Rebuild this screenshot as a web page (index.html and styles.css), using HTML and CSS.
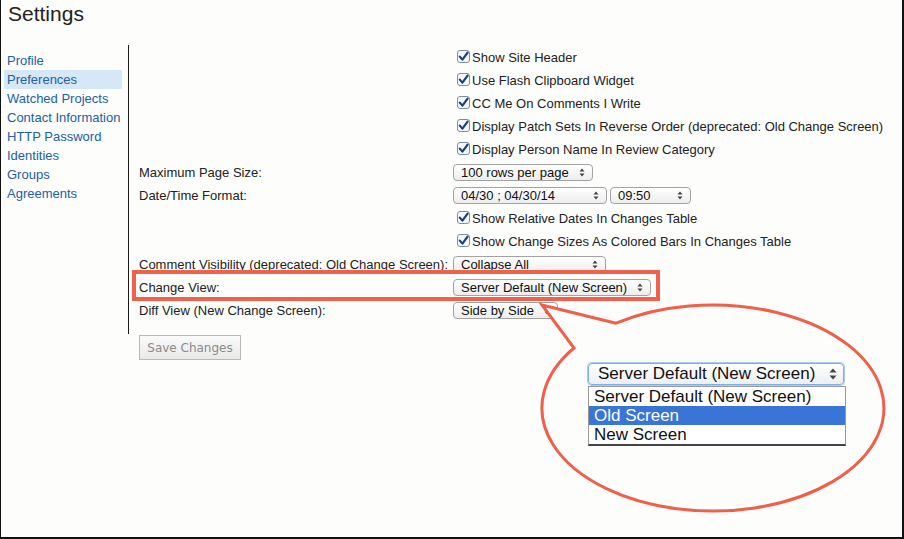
FILE: index.html
```html
<!DOCTYPE html>
<html>
<head>
<meta charset="utf-8">
<link rel="stylesheet" href="styles.css">
</head>
<body>
<div class="frame">
  <h1 class="title">Settings</h1>
  <div class="main">
    <nav class="side">
      <a class="nav">Profile</a>
      <a class="nav active">Preferences</a>
      <a class="nav">Watched Projects</a>
      <a class="nav">Contact Information</a>
      <a class="nav">HTTP Password</a>
      <a class="nav">Identities</a>
      <a class="nav">Groups</a>
      <a class="nav">Agreements</a>
    </nav>
    <div class="content">
      <div class="grid">
        <div class="lbl"></div>
        <div class="ctl"><span class="chk"><svg class="box" width="13" height="13" viewBox="0 0 13 13"><rect x="0.5" y="0.5" width="12" height="12" rx="2.5" fill="#f4f8fc" stroke="#7f8fa3"/><path d="M2.8 6.6 L5.4 9.6 L10.6 2.6" fill="none" stroke="#1b3f7a" stroke-width="2.2" stroke-linecap="round" stroke-linejoin="round"/></svg>Show Site Header</span></div>
        <div class="lbl"></div>
        <div class="ctl"><span class="chk"><svg class="box" width="13" height="13" viewBox="0 0 13 13"><rect x="0.5" y="0.5" width="12" height="12" rx="2.5" fill="#f4f8fc" stroke="#7f8fa3"/><path d="M2.8 6.6 L5.4 9.6 L10.6 2.6" fill="none" stroke="#1b3f7a" stroke-width="2.2" stroke-linecap="round" stroke-linejoin="round"/></svg>Use Flash Clipboard Widget</span></div>
        <div class="lbl"></div>
        <div class="ctl"><span class="chk"><svg class="box" width="13" height="13" viewBox="0 0 13 13"><rect x="0.5" y="0.5" width="12" height="12" rx="2.5" fill="#f4f8fc" stroke="#7f8fa3"/><path d="M2.8 6.6 L5.4 9.6 L10.6 2.6" fill="none" stroke="#1b3f7a" stroke-width="2.2" stroke-linecap="round" stroke-linejoin="round"/></svg>CC Me On Comments I Write</span></div>
        <div class="lbl"></div>
        <div class="ctl"><span class="chk"><svg class="box" width="13" height="13" viewBox="0 0 13 13"><rect x="0.5" y="0.5" width="12" height="12" rx="2.5" fill="#f4f8fc" stroke="#7f8fa3"/><path d="M2.8 6.6 L5.4 9.6 L10.6 2.6" fill="none" stroke="#1b3f7a" stroke-width="2.2" stroke-linecap="round" stroke-linejoin="round"/></svg>Display Patch Sets In Reverse Order (deprecated: Old Change Screen)</span></div>
        <div class="lbl"></div>
        <div class="ctl"><span class="chk"><svg class="box" width="13" height="13" viewBox="0 0 13 13"><rect x="0.5" y="0.5" width="12" height="12" rx="2.5" fill="#f4f8fc" stroke="#7f8fa3"/><path d="M2.8 6.6 L5.4 9.6 L10.6 2.6" fill="none" stroke="#1b3f7a" stroke-width="2.2" stroke-linecap="round" stroke-linejoin="round"/></svg>Display Person Name In Review Category</span></div>

        <div class="lbl">Maximum Page Size:</div>
        <div class="ctl sels"><span class="sel w-rows">100 rows per page<svg class="arr" width="6" height="9" viewBox="0 0 6 9"><path d="M3 0.5 L5.5 3.5 L0.5 3.5Z M3 8.5 L5.5 5.5 L0.5 5.5Z" fill="#444"/></svg></span></div>

        <div class="lbl">Date/Time Format:</div>
        <div class="ctl sels"><span class="sel w-date">04/30 ; 04/30/14<svg class="arr" width="6" height="9" viewBox="0 0 6 9"><path d="M3 0.5 L5.5 3.5 L0.5 3.5Z M3 8.5 L5.5 5.5 L0.5 5.5Z" fill="#444"/></svg></span><span class="sel w-time">09:50<svg class="arr" width="6" height="9" viewBox="0 0 6 9"><path d="M3 0.5 L5.5 3.5 L0.5 3.5Z M3 8.5 L5.5 5.5 L0.5 5.5Z" fill="#444"/></svg></span></div>

        <div class="lbl"></div>
        <div class="ctl"><span class="chk"><svg class="box" width="13" height="13" viewBox="0 0 13 13"><rect x="0.5" y="0.5" width="12" height="12" rx="2.5" fill="#f4f8fc" stroke="#7f8fa3"/><path d="M2.8 6.6 L5.4 9.6 L10.6 2.6" fill="none" stroke="#1b3f7a" stroke-width="2.2" stroke-linecap="round" stroke-linejoin="round"/></svg>Show Relative Dates In Changes Table</span></div>
        <div class="lbl"></div>
        <div class="ctl"><span class="chk"><svg class="box" width="13" height="13" viewBox="0 0 13 13"><rect x="0.5" y="0.5" width="12" height="12" rx="2.5" fill="#f4f8fc" stroke="#7f8fa3"/><path d="M2.8 6.6 L5.4 9.6 L10.6 2.6" fill="none" stroke="#1b3f7a" stroke-width="2.2" stroke-linecap="round" stroke-linejoin="round"/></svg>Show Change Sizes As Colored Bars In Changes Table</span></div>

        <div class="lbl">Comment Visibility (deprecated: Old Change Screen):</div>
        <div class="ctl sels"><span class="sel w-collapse">Collapse All<svg class="arr" width="6" height="9" viewBox="0 0 6 9"><path d="M3 0.5 L5.5 3.5 L0.5 3.5Z M3 8.5 L5.5 5.5 L0.5 5.5Z" fill="#444"/></svg></span></div>

        <div class="lbl">Change View:</div>
        <div class="ctl sels"><span class="sel w-view">Server Default (New Screen)<svg class="arr" width="6" height="9" viewBox="0 0 6 9"><path d="M3 0.5 L5.5 3.5 L0.5 3.5Z M3 8.5 L5.5 5.5 L0.5 5.5Z" fill="#444"/></svg></span></div>

        <div class="lbl">Diff View (New Change Screen):</div>
        <div class="ctl sels"><span class="sel w-diff">Side by Side<svg class="arr" width="6" height="9" viewBox="0 0 6 9"><path d="M3 0.5 L5.5 3.5 L0.5 3.5Z M3 8.5 L5.5 5.5 L0.5 5.5Z" fill="#444"/></svg></span></div>
      </div>
    </div>
  </div>
  <div class="actions"><button class="save" disabled>Save Changes</button></div>

  <div class="highlight"></div>

  <svg class="callout" width="904" height="539" viewBox="0 0 904 539">
    <path d="M616 323.2 L542 305 L574 348 A171 103 0 1 0 616 323.2 Z" fill="#fdfdfb" stroke="#ef5f4a" stroke-width="3" stroke-linejoin="miter"/>
  </svg>

  <div class="bigsel">Server Default (New Screen)<svg class="bigarr" width="8" height="12" viewBox="0 0 8 12"><path d="M4 0.5 L7.5 4.5 L0.5 4.5Z M4 11.5 L7.5 7.5 L0.5 7.5Z" fill="#444"/></svg></div>
  <div class="listbox">
    <div class="opt">Server Default (New Screen)</div>
    <div class="opt picked">Old Screen</div>
    <div class="opt">New Screen</div>
  </div>
</div>
</body>
</html>
```
FILE: styles.css
```css
html, body {
  margin: 0;
  padding: 0;
  background: #fdfdfb;
}

.frame {
  position: relative;
  width: 904px;
  height: 539px;
  box-sizing: border-box;
  border-left: 1px solid #111;
  border-right: 2px solid #111;
  border-bottom: 2px solid #111;
  background: #fdfdfb;
  font-family: "Liberation Sans", Arial, sans-serif;
  font-size: 13px;
  color: #222;
  overflow: hidden;
}

.title {
  margin: 0;
  height: 43px;
  padding: 2px 0 0 7px;
  font-size: 21px;
  line-height: 24px;
  font-weight: normal;
  color: #222;
}

.main {
  display: flex;
}

.side {
  width: 127px;
  border-right: 1px solid #1a1a1a;
  padding-top: 6px;
  display: flex;
  flex-direction: column;
}

.nav {
  display: block;
  margin-left: 3px;
  width: 118px;
  height: 19px;
  line-height: 19px;
  padding-left: 3px;
  box-sizing: border-box;
  color: #2160a8;
  white-space: nowrap;
}

.nav.active {
  background: #d6e7f6;
}

.content {
  padding: 1px 0 12px 10px;
}

.grid {
  display: grid;
  grid-template-columns: 314px auto;
  grid-auto-rows: 23px;
  align-items: center;
}

.lbl {
  white-space: nowrap;
}

.ctl {
  display: flex;
  align-items: center;
  white-space: nowrap;
}

.chk {
  display: flex;
  align-items: center;
  padding-left: 4px;
}

.box {
  margin-right: 2px;
  margin-top: -2px;
}

.sels {
  gap: 3px;
}

.sel {
  display: inline-flex;
  align-items: center;
  justify-content: space-between;
  box-sizing: border-box;
  height: 17px;
  padding: 0 7px 0 7px;
  border: 1px solid #a3a3a3;
  border-radius: 4px;
  background: linear-gradient(#ffffff, #ededed);
  color: #111;
  font-size: 13px;
  line-height: 15px;
}

.arr {
  flex: none;
}

.w-rows { width: 140px; }
.w-date { width: 154px; }
.w-time { width: 81px; }
.w-collapse { width: 153px; }
.w-view { width: 198px; }
.w-diff { width: 105px; }

.actions {
  padding: 1px 0 0 138px;
}

.save {
  width: 102px;
  height: 25px;
  margin: 0;
  padding: 0;
  border: 1px solid #b9b9b9;
  background: linear-gradient(#fafafa, #e9e9e9);
  color: #8a8a8a;
  font-family: "DejaVu Sans", sans-serif;
  font-size: 12px;
}

.highlight {
  position: absolute;
  left: 131px;
  top: 270px;
  width: 528px;
  height: 31px;
  box-sizing: border-box;
  border: 4px solid #f1604b;
}

.callout {
  position: absolute;
  left: -1px;
  top: 0;
}

.bigsel {
  position: absolute;
  left: 587px;
  top: 363px;
  width: 256px;
  height: 22px;
  box-sizing: border-box;
  display: flex;
  align-items: center;
  justify-content: space-between;
  padding: 0 6px 0 9px;
  border: 1px solid #7faee4;
  border-radius: 4px;
  box-shadow: 0 0 0 1px #a9c9ef;
  background: linear-gradient(#ffffff, #eeeeee);
  font-size: 17px;
  color: #111;
}

.listbox {
  position: absolute;
  left: 587px;
  top: 386px;
  width: 258px;
  box-sizing: border-box;
  border: 1px solid #9a9a9a;
  border-bottom: 2px solid #444;
  background: #fff;
  font-size: 17px;
  color: #111;
}

.opt {
  height: 19px;
  line-height: 19px;
  padding-left: 5px;
  white-space: nowrap;
}

.opt.picked {
  background: #3875d7;
  color: #fff;
}
```
